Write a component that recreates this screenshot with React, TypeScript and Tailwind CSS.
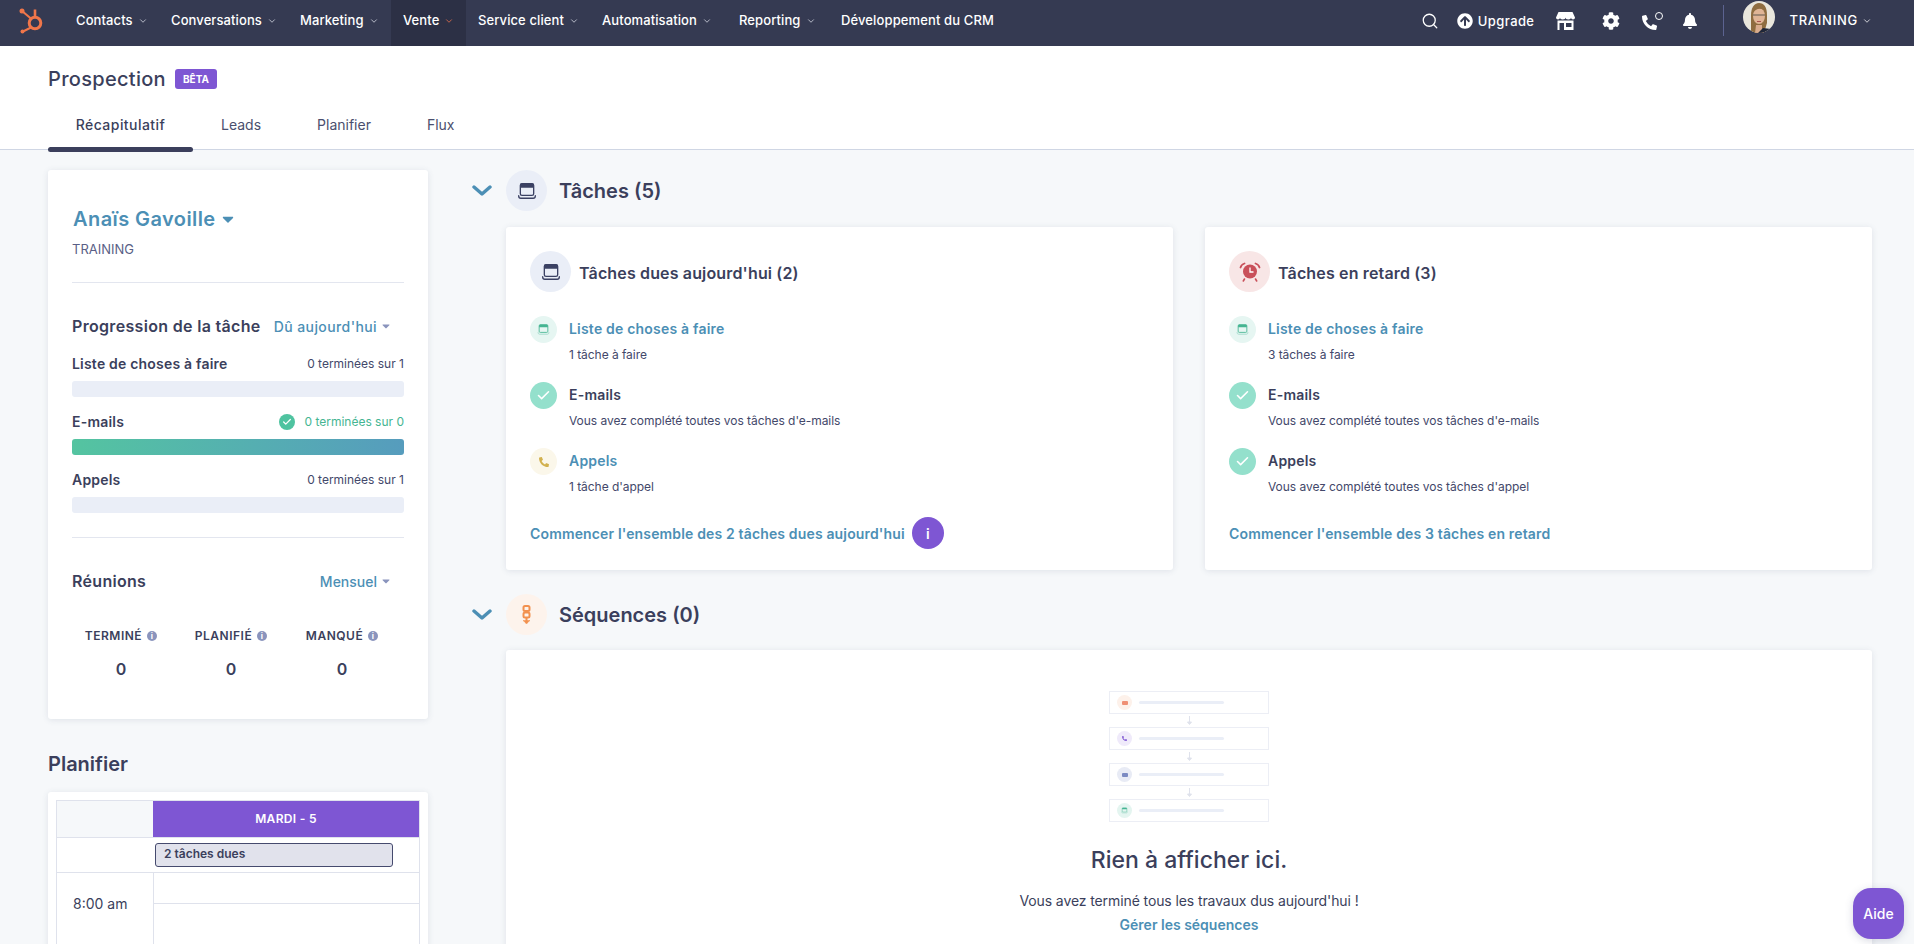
import React from "react";
import { Search, ChevronDown, Check } from "lucide-react";
import { FaArrowCircleUp, FaCog, FaBell, FaPhoneAlt, FaCaretDown } from "react-icons/fa";

function TaskIcon({ size = 18, color = "#3b4163", light = "#3b4163" }: { size?: number; color?: string; light?: string }) {
  return (
    <svg width={size} height={size} viewBox="0 0 18 18" fill="none">
      <path d="M3 3.5a1.5 1.5 0 0 1 1.5-1.5h9A1.5 1.5 0 0 1 15 3.5V6H3z" fill={color} />
      <rect x="3" y="2.5" width="12" height="10.5" rx="1.5" stroke={color} strokeWidth="1.2" />
      <path d="M1.5 13.2c0 1.6.8 2.3 2 2.3h11c1.2 0 2-.7 2-2.3" stroke={light} strokeWidth="1.2" strokeLinecap="round" />
    </svg>
  );
}

function Hubspot() {
  return (
    <svg width="26" height="26" viewBox="0 0 26 26" fill="none">
      <circle cx="4" cy="3" r="2.500" fill="#f0764a" />
      <path d="M4 3l9.500 8" stroke="#f0764a" strokeWidth="2" />
      <path d="M17 1.500v7" stroke="#f0764a" strokeWidth="2.600" />
      <circle cx="17" cy="15" r="5.800" stroke="#f0764a" strokeWidth="3" />
      <path d="M13 19.500l-8 4" stroke="#f0764a" strokeWidth="2" />
      <circle cx="4.500" cy="23.500" r="2" fill="#f0764a" />
    </svg>
  );
}

function Store() {
  return (
    <svg width="19" height="18" viewBox="0 0 19 18" fill="#fff">
      <path d="M2.500 0h14L19 5.500c0 1.200-1 2-2 2s-2-.8-2-2c0 1.200-1 2-2.700 2S9.500 6.700 9.500 5.500c0 1.200-1 2-2.800 2S4 6.700 4 5.500c0 1.200-1 2-2 2s-2-.8-2-2z" />
      <path d="M1.500 8.500h16V18h-16zM3.500 11v7h4.500v-7zM10 11v4h5.500v-4z" fillRule="evenodd" />
    </svg>
  );
}

function Avatar() {
  return (
    <svg width="32" height="32" viewBox="0 0 32 32">
      <defs>
        <clipPath id="av"><circle cx="16" cy="16" r="16" /></clipPath>
      </defs>
      <g clipPath="url(#av)">
        <rect width="32" height="32" fill="#e9e6dc" />
        <path d="M8 32V14c0-7 3-12 8-12s8 4 8 12v8l-3 10z" fill="#8f6d40" />
        <path d="M13 24h6v4l7 4H12z" fill="#d9ac8e" />
        <path d="M15 32l5-5 8 1 2 4z" fill="#1f2638" />
        <ellipse cx="16" cy="15" rx="6" ry="8" fill="#e0b596" />
        <path d="M10 12c2-4 8-6 12-2l-1-5-8-1z" fill="#8f6d40" />
        <path d="M10 14h12" stroke="#5f564c" strokeWidth="1" />
        <path d="M14 20.500h4" stroke="#a9544f" strokeWidth="1" />
      </g>
    </svg>
  );
}

function Alarm() {
  return (
    <svg width="22" height="22" viewBox="0 0 22 22" fill="none">
      <circle cx="11" cy="10.500" r="7" fill="#c9505a" />
      <path d="M11 6.500v4.500h3.500" stroke="#fff" strokeWidth="1.300" />
      <path d="M1.500 6.500c.5-2 2-3.500 4-4M20.500 6.500c-.5-2-2-3.500-4-4" stroke="#c9505a" strokeWidth="1.800" strokeLinecap="round" />
      <path d="M5.500 18l-1.200 2M16.500 18l1.200 2" stroke="#c9505a" strokeWidth="1.600" strokeLinecap="round" />
    </svg>
  );
}

function SeqIcon() {
  return (
    <svg width="14" height="20" viewBox="0 0 14 20" fill="none" stroke="#f2914f" strokeWidth="2">
      <rect x="3.500" y="1" width="6" height="5" rx="1.500" />
      <rect x="3.500" y="7.500" width="6" height="5" rx="1.500" />
      <path d="M6.500 12.500v6" />
      <path d="M3 15.500h7l-3.500 3z" fill="#f2914f" strokeWidth="0.500" />
    </svg>
  );
}

const navItems = [
  ["Contacts", "w-[95px]"],
  ["Conversations", "w-[129px]"],
  ["Marketing", "w-[103px]"],
  ["Vente", "w-[75px]"],
  ["Service client", "w-[124px]"],
  ["Automatisation", "w-[137px]"],
  ["Reporting", "w-[102px]"],
];

function TopNav() {
  return (
    <div className="flex h-[46px] items-center bg-[#353a52] text-white">
      <div className="ml-[18px] mr-[19px] flex w-[27px] items-center pb-[4px]"><Hubspot /></div>
      <div className="flex h-full items-center">
        {navItems.map(([n, w]) => (
          <div
            key={n}
            className={`flex h-full items-center gap-[5px] pb-[5px] pl-[12px] text-[13px] font-medium tracking-[0.1px] ${w} ${n === "Vente" ? "bg-[#2c3045]" : ""}`}
          >
            <span className="whitespace-nowrap">{n}</span>
            <ChevronDown size={10} strokeWidth={1.800} className={n === "Vente" ? "text-[#f2754f]" : "text-[#dfe2ec]"} />
          </div>
        ))}
        <div className="whitespace-nowrap pb-[5px] pl-[12px] text-[13px] font-medium tracking-[0.12px]">Développement du CRM</div>
      </div>
      <div className="ml-auto flex h-full items-center pb-[5px] pr-[42px]">
        <Search size={18} strokeWidth={1.700} />
        <FaArrowCircleUp size={16} className="ml-[18px]" />
        <span className="ml-[5px] mt-[2px] text-[13px] font-medium tracking-[0.4px]">Upgrade</span>
        <span className="ml-[22px]"><Store /></span>
        <FaCog size={18} className="ml-[27px]" />
        <span className="ml-[22px] flex w-[19px] items-start">
          <FaPhoneAlt size={15} className="mt-[3px] shrink-0" />
          <span className="-ml-[2px] h-[8px] w-[8px] shrink-0 rounded-full border border-white" />
        </span>
        <FaBell size={16} className="ml-[21px]" />
        <div className="ml-[25px] h-[31px] w-px bg-[#5c6390]" />
        <span className="mb-[7px] ml-[19px]"><Avatar /></span>
        <span className="ml-[14px] text-[13px] font-medium tracking-[0.75px]">TRAINING</span>
        <ChevronDown size={10} strokeWidth={1.800} className="ml-[4px]" />
      </div>
    </div>
  );
}

function PageHeader() {
  return (
    <div className="h-[104px] border-b border-[#cfd6e4] bg-white">
      <div className="flex h-[66px] items-center pl-[48px]">
        <span className="text-[20px] font-medium tracking-[0.3px] text-[#3b3f5c]">Prospection</span>
        <span className="ml-[9px] flex h-[20px] w-[42px] items-center justify-center rounded-[3px] bg-[#7e56d3] text-[10px] font-bold text-white">BÊTA</span>
      </div>
      <div className="flex h-[37px] items-start pl-[48px] text-[14px] text-[#4a4f6e]">
        <div className="flex h-[36px] w-[145px] flex-col items-center">
          <span className="mt-[2px] font-medium tracking-[0.45px] text-[#3b3f5c]">Récapitulatif</span>
          <div className="mt-auto h-[5px] w-full translate-y-[4px] rounded-[3px] bg-[#3b3f5c]" />
        </div>
        <span className="ml-[28px] mt-[2px]">Leads</span>
        <span className="ml-[56px] mt-[2px]">Planifier</span>
        <span className="ml-[56px] mt-[2px]">Flux</span>
      </div>
    </div>
  );
}

function Progress({ label, right, done }: { label: string; right: string; done?: boolean }) {
  return (
    <div className="h-[58px]">
      <div className="flex h-[15px] items-center justify-between">
        <span className="text-[14px] font-semibold tracking-[0.2px] text-[#3b3f5c]">{label}</span>
        {done ? (
          <span className="flex items-center text-[12px] text-[#45b592]">
            <span className="mr-[9px] flex h-[16px] w-[16px] items-center justify-center rounded-full bg-[#4fc3a0]">
              <Check size={10} strokeWidth={3} color="#fff" />
            </span>
            {right}
          </span>
        ) : (
          <span className="text-[12px] text-[#43486a]">{right}</span>
        )}
      </div>
      <div className={`mt-[10px] h-[16px] rounded-[3px] ${done ? "bg-gradient-to-r from-[#54c4a0] to-[#569cbd]" : "bg-[#eaeef7]"}`} />
    </div>
  );
}

function Stat({ label, className }: { label: string; className: string }) {
  return (
    <div className={`flex flex-col items-center ${className}`}>
      <span className="flex items-center text-[12px] font-semibold tracking-[0.5px] text-[#3b3f5c]">
        {label}
        <span className="ml-[5px] flex h-[10px] w-[10px] items-center justify-center rounded-full bg-[#8a94bd] text-[8px] font-bold leading-none text-white">i</span>
      </span>
      <span className="mt-[14px] text-[16px] font-semibold leading-[20px] text-[#3b3f5c]">0</span>
    </div>
  );
}

function SideColumn() {
  return (
    <div className="w-[380px] shrink-0 pt-[20px]">
      <div className="h-[549px] rounded-[3px] bg-white px-[24px] shadow-[0_1px_6px_rgba(60,70,110,0.12)]">
        <div className="flex items-center pt-[37px] text-[#4c8fb5]">
          <span className="ml-[1px] text-[20px] font-semibold leading-[24px] tracking-[0.42px]">Anaïs Gavoille</span>
          <FaCaretDown size={18} className="ml-[3px]" />
        </div>
        <div className="mt-[10px] text-[13px] leading-[16px] text-[#5a5f86]">TRAINING</div>
        <div className="mt-[25px] h-px bg-[#e3e6ef]" />
        <div className="mt-[33px] flex h-[20px] items-center justify-between pr-[12px]">
          <span className="text-[16px] font-semibold tracking-[0.32px] text-[#3b3f5c]">Progression de la tâche</span>
          <span className="flex items-center text-[14px] font-medium tracking-[0.4px] text-[#4c8fb5]">
            Dû aujourd'hui
            <FaCaretDown size={12} className="ml-[3px] text-[#8a94bd]" />
          </span>
        </div>
        <div className="mt-[20px]">
          <Progress label="Liste de choses à faire" right="0 terminées sur 1" />
          <Progress label="E-mails" right="0 terminées sur 0" done />
          <Progress label="Appels" right="0 terminées sur 1" />
        </div>
        <div className="mt-[7px] h-px bg-[#e3e6ef]" />
        <div className="mt-[33px] flex h-[20px] items-center justify-between pr-[12px]">
          <span className="text-[16px] font-semibold tracking-[0.3px] text-[#3b3f5c]">Réunions</span>
          <span className="flex items-center text-[14px] font-medium text-[#4c8fb5]">
            Mensuel
            <FaCaretDown size={12} className="ml-[3px] text-[#8a94bd]" />
          </span>
        </div>
        <div className="mt-[36px] flex">
          <Stat label="TERMINÉ" className="w-[98px]" />
          <Stat label="PLANIFIÉ" className="w-[122px]" />
          <Stat label="MANQUÉ" className="w-[100px]" />
        </div>
      </div>
      <div className="mt-[33px] text-[20px] font-semibold leading-[24px] text-[#3b3f5c]">Planifier</div>
      <div className="mt-[16px] h-[400px] rounded-[3px] bg-white px-[8px] pt-[8px] shadow-[0_1px_6px_rgba(60,70,110,0.12)]">
        <div className="h-full border border-[#dfe2ec] text-[#3b3f5c]">
          <div className="flex h-[37px] border-b border-[#dfe2ec]">
            <div className="w-[96px] bg-[#f6f8fa]" />
            <div className="flex flex-1 items-center justify-center bg-[#7e56d3] text-[12px] font-semibold tracking-[0.3px] text-white">MARDI - 5</div>
          </div>
          <div className="flex h-[35px] border-b border-[#dfe2ec] pl-[98px] pt-[5px]">
            <div className="h-[24px] w-[238px] rounded-[3px] border border-[#454a6e] bg-[#e1e2ec] pl-[8px] text-[12px] font-semibold leading-[20px]">2 tâches dues</div>
          </div>
          <div className="flex h-[320px]">
            <div className="w-[97px] border-r border-[#dfe2ec] pl-[16px] pt-[21px] text-[14px] leading-[20px]">8:00 am</div>
            <div className="flex-1">
              <div className="h-[31px] border-b border-[#dfe2ec]" />
              <div className="h-[31px]" />
            </div>
          </div>
        </div>
      </div>
    </div>
  );
}

function SectionHead({ title, bg, icon }: { title: string; bg: string; icon: React.ReactNode }) {
  return (
    <div className="flex h-[41px] items-center">
      <svg width="20" height="12" viewBox="0 0 20 12" fill="none">
        <path d="M2 2l8 7 8-7" stroke="#4c8fb5" strokeWidth="3.400" strokeLinecap="round" strokeLinejoin="round" />
      </svg>
      <div className={`ml-[14px] flex h-[41px] w-[41px] items-center justify-center rounded-full ${bg}`}>{icon}</div>
      <span className="ml-[12px] text-[20px] font-semibold text-[#3b3f5c]">{title}</span>
    </div>
  );
}

function Row({ icon, bg, title, sub, link }: { icon: React.ReactNode; bg: string; title: string; sub: string; link?: boolean }) {
  return (
    <div className="flex h-[66px]">
      <div className={`flex h-[27px] w-[27px] shrink-0 items-center justify-center rounded-full ${bg}`}>{icon}</div>
      <div className="ml-[12px]">
        <div className={`-mt-[1px] h-[27px] text-[14px] font-semibold leading-[27px] tracking-[0.2px] ${link ? "text-[#4c8fb5]" : "text-[#3b3f5c]"}`}>{title}</div>
        <div className="mt-[5px] text-[12px] leading-[16px] tracking-[-0.05px] text-[#43486a]">{sub}</div>
      </div>
    </div>
  );
}

const done = <Check size={15} strokeWidth={2.500} color="#fff" />;
const listIcon = <TaskIcon size={13} color="#45b592" light="#9fd9c8" />;

function TaskCard({ head, headBg, title, rows, cta, badge }: { head: React.ReactNode; headBg: string; title: string; rows: React.ReactNode; cta: string; badge?: boolean }) {
  return (
    <div className="h-[343px] rounded-[3px] bg-white px-[24px] pt-[24px] shadow-[0_1px_6px_rgba(60,70,110,0.12)]">
      <div className="flex h-[41px] items-center">
        <div className={`flex h-[41px] w-[41px] items-center justify-center rounded-full ${headBg}`}>{head}</div>
        <span className="ml-[8px] mt-[2px] text-[16px] font-semibold tracking-[0.15px] text-[#3b3f5c]">{title}</span>
      </div>
      <div className="mt-[24px]">{rows}</div>
      <div className="mt-[3px] flex h-[32px] items-center">
        <span className="text-[14px] font-semibold tracking-[0.15px] text-[#4c8fb5]">{cta}</span>
        {badge && <span className="ml-[7px] flex h-[32px] w-[32px] items-center justify-center rounded-full bg-[#7e56d3] text-[14px] font-semibold text-white">i</span>}
      </div>
    </div>
  );
}

function IllRow({ bg, icon }: { bg: string; icon: React.ReactNode }) {
  return (
    <div className="flex h-[23px] w-[160px] items-center border border-[#eceef5] pl-[7px]">
      <div className={`flex h-[15px] w-[15px] items-center justify-center rounded-full ${bg}`}>{icon}</div>
      <div className="ml-[7px] h-[3px] w-[85px] rounded-full bg-[#eaeef7]" />
    </div>
  );
}

function IllArrow() {
  return (
    <div className="flex h-[13px] w-[160px] items-center justify-center">
      <svg width="5" height="9" viewBox="0 0 5 9" fill="none"><path d="M2.500 0v7M.5 6l2 2.500 2-2.500z" stroke="#dfe2ec" fill="#dfe2ec" strokeWidth="1" /></svg>
    </div>
  );
}

function Illustration() {
  return (
    <div className="flex flex-col items-center">
      <IllRow bg="bg-[#fdf1ea]" icon={<div className="h-[4px] w-[6px] rounded-[1px] bg-[#ef8f74]" />} />
      <IllArrow />
      <IllRow bg="bg-[#efeafa]" icon={<FaPhoneAlt size={5} color="#7e56d3" />} />
      <IllArrow />
      <IllRow bg="bg-[#e8ebf5]" icon={<div className="h-[4px] w-[6px] rounded-[1px] bg-[#7b8ac2]" />} />
      <IllArrow />
      <IllRow bg="bg-[#e4f5f0]" icon={<TaskIcon size={7} color="#45b592" light="#9fd9c8" />} />
    </div>
  );
}

function MainColumn() {
  return (
    <div className="min-w-0 flex-1 pr-[42px] pt-[20px]">
      <SectionHead title="Tâches (5)" bg="bg-[#eaeef7]" icon={<TaskIcon size={20} />} />
      <div className="ml-[34px] mt-[16px] grid grid-cols-2 gap-[32px]">
        <TaskCard
          head={<TaskIcon size={20} />}
          headBg="bg-[#eaeef7]"
          title="Tâches dues aujourd'hui (2)"
          cta="Commencer l'ensemble des 2 tâches dues aujourd'hui"
          badge
          rows={
            <>
              <Row icon={listIcon} bg="bg-[#e6f6f2]" title="Liste de choses à faire" sub="1 tâche à faire" link />
              <Row icon={done} bg="bg-[#94e0cc]" title="E-mails" sub="Vous avez complété toutes vos tâches d'e-mails" />
              <Row icon={<FaPhoneAlt size={10} color="#d2b14f" />} bg="bg-[#fbf7ea]" title="Appels" sub="1 tâche d'appel" link />
            </>
          }
        />
        <TaskCard
          head={<Alarm />}
          headBg="bg-[#f8e6e6]"
          title="Tâches en retard (3)"
          cta="Commencer l'ensemble des 3 tâches en retard"
          rows={
            <>
              <Row icon={listIcon} bg="bg-[#e6f6f2]" title="Liste de choses à faire" sub="3 tâches à faire" link />
              <Row icon={done} bg="bg-[#94e0cc]" title="E-mails" sub="Vous avez complété toutes vos tâches d'e-mails" />
              <Row icon={done} bg="bg-[#94e0cc]" title="Appels" sub="Vous avez complété toutes vos tâches d'appel" />
            </>
          }
        />
      </div>
      <div className="mt-[24px]">
        <SectionHead title="Séquences (0)" bg="bg-[#fdf3ec]" icon={<SeqIcon />} />
      </div>
      <div className="ml-[34px] mt-[15px] flex h-[400px] flex-col items-center rounded-[3px] bg-white pt-[41px] shadow-[0_1px_6px_rgba(60,70,110,0.12)]">
        <Illustration />
        <div className="mt-[22px] text-[23px] font-medium leading-[32px] text-[#3b3f5c]">Rien à afficher ici.</div>
        <div className="mt-[15px] text-[14px] leading-[20px] tracking-[-0.1px] text-[#3b3f5c]">Vous avez terminé tous les travaux dus aujourd'hui !</div>
        <div className="mt-[4px] text-[14px] font-semibold leading-[20px] text-[#4c8fb5]">Gérer les séquences</div>
      </div>
    </div>
  );
}

export default function App() {
  return (
    <div className="relative h-[944px] overflow-hidden bg-[#f6f8fa] font-[family-name:Inter,sans-serif]">
      <TopNav />
      <PageHeader />
      <div className="flex gap-[44px] pl-[48px]">
        <SideColumn />
        <MainColumn />
      </div>
      <div className="absolute bottom-[5px] right-[10px] flex h-[51px] w-[51px] items-center justify-center rounded-[18px] bg-[#7e56d3] text-[14px] font-medium text-white shadow-[0_2px_8px_rgba(60,70,110,0.2)]">Aide</div>
    </div>
  );
}
